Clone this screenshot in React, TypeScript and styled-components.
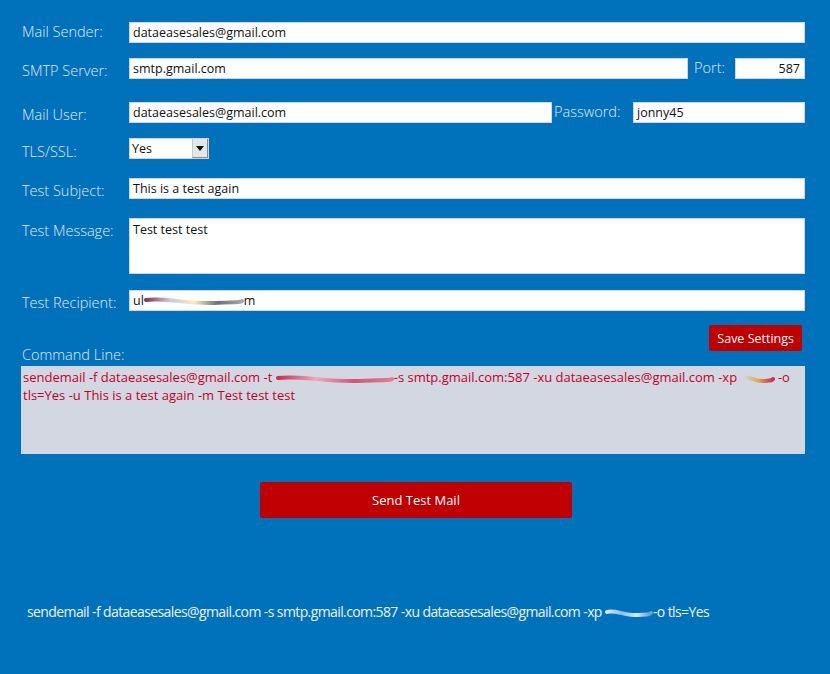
import styled, { createGlobalStyle } from 'styled-components';

const GlobalStyle = createGlobalStyle`
  html, body {
    margin: 0;
    padding: 0;
    background: #0071bb;
  }
  body {
    font-family: "Open Sans", "Noto Sans", sans-serif;
  }
`;

const Page = styled.div`
  width: 830px;
  height: 674px;
  box-sizing: border-box;
  background: #0071bb;
  padding: 22px 25px 0 21px;
  display: flex;
  flex-direction: column;
`;

const Row = styled.div<{ $top: number; $h?: number }>`
  display: flex;
  align-items: flex-start;
  height: ${(p) => p.$h ?? 21}px;
  margin-top: ${(p) => p.$top}px;
`;

const Label = styled.div<{ $drop?: number; $width?: number }>`
  box-sizing: border-box;
  width: ${(p) => p.$width ?? 108}px;
  flex: none;
  padding-left: 1px;
  padding-top: ${(p) => p.$drop ?? 0}px;
  color: #e1e8f1;
  font-weight: 300;
  font-size: 14.5px;
  line-height: 20px;
  white-space: nowrap;
`;

const Input = styled.div<{ $width?: number; $right?: boolean }>`
  box-sizing: border-box;
  height: 21px;
  ${(p) => (p.$width ? `width: ${p.$width}px; flex: none;` : 'flex: 1;')}
  background: #fff;
  border: 1px solid #d2d6dc;
  color: #111;
  font-size: 12.5px;
  line-height: 19px;
  padding: 0 4px 0 3px;
  white-space: nowrap;
  overflow: hidden;
  display: flex;
  align-items: center;
  justify-content: ${(p) => (p.$right ? 'flex-end' : 'flex-start')};
`;

const TextArea = styled(Input)`
  height: 56px;
  align-items: flex-start;
  padding-top: 1px;
`;

const SideLabel = styled(Label)<{ $gap: number }>`
  padding-left: 0;
  margin-left: ${(p) => p.$gap}px;
`;

const Select = styled.div`
  box-sizing: border-box;
  width: 80px;
  height: 21px;
  background: #fff;
  border: 1px solid #d2d6dc;
  display: flex;
  font-size: 12.5px;
  color: #111;
`;

const SelectValue = styled.div`
  flex: 1;
  padding-left: 2px;
  line-height: 19px;
`;

const SelectArrow = styled.div`
  width: 16px;
  background: #e6e6e6;
  border-left: 1px solid #c8c8c8;
  border-right: 1px solid #8a8a8a;
  border-bottom: 1px solid #8a8a8a;
  box-sizing: border-box;
  display: flex;
  align-items: center;
  justify-content: center;
  &::after {
    content: "";
    border-left: 4px solid transparent;
    border-right: 4px solid transparent;
    border-top: 5px solid #111;
  }
`;

const ActionRow = styled.div`
  display: flex;
  justify-content: space-between;
  margin-top: 14px;
  height: 39px;
`;

const CommandLabel = styled(Label)`
  align-self: flex-end;
  margin-bottom: -1px;
`;

const SmallButton = styled.button`
  margin-right: 3px;
  height: 26px;
  padding: 0 8px;
  border: none;
  border-radius: 2px;
  background: #c00000;
  color: #fff;
  font-family: "Open Sans", "Noto Sans", sans-serif;
  font-size: 12.5px;
`;

const CommandBox = styled.div`
  margin-top: 2px;
  height: 88px;
  box-sizing: border-box;
  background: #d3d7e2;
  color: #c4001f;
  font-size: 13px;
  line-height: 18px;
  padding: 2px 2px;
`;

const SendButton = styled.button`
  align-self: center;
  margin: 28px 0 0 6px;
  width: 312px;
  height: 36px;
  border: none;
  border-radius: 2px;
  background: #c00000;
  color: #fff;
  font-family: "Open Sans", "Noto Sans", sans-serif;
  font-size: 13px;
`;

const Footer = styled.div`
  margin-top: 84px;
  padding-left: 6px;
  color: #eef3fa;
  font-size: 14px;
  letter-spacing: -0.6px;
  white-space: nowrap;
`;

const Scribble = ({ w, colors, id }: { w: number; colors: string[]; id: string }) => (
  <svg width={w} height={12} viewBox={`0 0 ${w} 12`} style={{ verticalAlign: 'middle' }}>
    <defs>
      <linearGradient id={id} x1="0" x2="1" y1="0" y2="0">
        {colors.map((c, i) => (
          <stop key={i} offset={i / (colors.length - 1)} stopColor={c} />
        ))}
      </linearGradient>
    </defs>
    <path
      d={`M2 5 C ${w * 0.2} 2, ${w * 0.4} 9, ${w * 0.7} 8 S ${w - 4} 7, ${w - 2} 6`}
      stroke={`url(#${id})`}
      strokeWidth="4"
      fill="none"
      strokeLinecap="round"
      opacity="0.85"
    />
  </svg>
);

export default function App() {
  return (
    <>
      <GlobalStyle />
      <Page>
        <Row $top={0}>
          <Label>Mail Sender:</Label>
          <Input>dataeasesales@gmail.com</Input>
        </Row>
        <Row $top={15}>
          <Label $drop={3}>SMTP Server:</Label>
          <Input>smtp.gmail.com</Input>
          <SideLabel $width={41} $gap={6}>Port:</SideLabel>
          <Input $width={70} $right>587</Input>
        </Row>
        <Row $top={23}>
          <Label $drop={3}>Mail User:</Label>
          <Input>dataeasesales@gmail.com</Input>
          <SideLabel $width={79} $gap={2} $drop={-1}>Password:</SideLabel>
          <Input $width={172}>jonny45</Input>
        </Row>
        <Row $top={15}>
          <Label $drop={4}>TLS/SSL:</Label>
          <Select>
            <SelectValue>Yes</SelectValue>
            <SelectArrow />
          </Select>
        </Row>
        <Row $top={19}>
          <Label $drop={3}>Test Subject:</Label>
          <Input>This is a test again</Input>
        </Row>
        <Row $top={19} $h={56}>
          <Label $drop={3}>Test Message:</Label>
          <TextArea>Test test test</TextArea>
        </Row>
        <Row $top={16}>
          <Label $drop={3}>Test Recipient:</Label>
          <Input>
            ul
            <Scribble id="s1" w={100} colors={['#7a1030', '#c9b8e0', '#ffe8a0', '#555', '#999']} />
            m
          </Input>
        </Row>
        <ActionRow>
          <CommandLabel>Command Line:</CommandLabel>
          <SmallButton>Save Settings</SmallButton>
        </ActionRow>
        <CommandBox>
          sendemail -f dataeasesales@gmail.com -t{' '}
          <Scribble id="s2" w={118} colors={['#c8102e', '#f0a0c0', '#d04060', '#e07080']} />
          -s smtp.gmail.com:587 -xu dataeasesales@gmail.com -xp{' '}
          <Scribble id="s3" w={34} colors={['#d3d7e2', '#e0a040', '#c8102e']} /> -o tls=Yes -u This is a test again -m Test test test
        </CommandBox>
        <SendButton>Send Test Mail</SendButton>
        <Footer>
          sendemail -f dataeasesales@gmail.com -s smtp.gmail.com:587 -xu dataeasesales@gmail.com -xp{' '}
          <Scribble id="s4" w={48} colors={['#ffffff', '#9fc8ff', '#ffffff', '#6aa0e0']} />
          -o tls=Yes
        </Footer>
      </Page>
    </>
  );
}
